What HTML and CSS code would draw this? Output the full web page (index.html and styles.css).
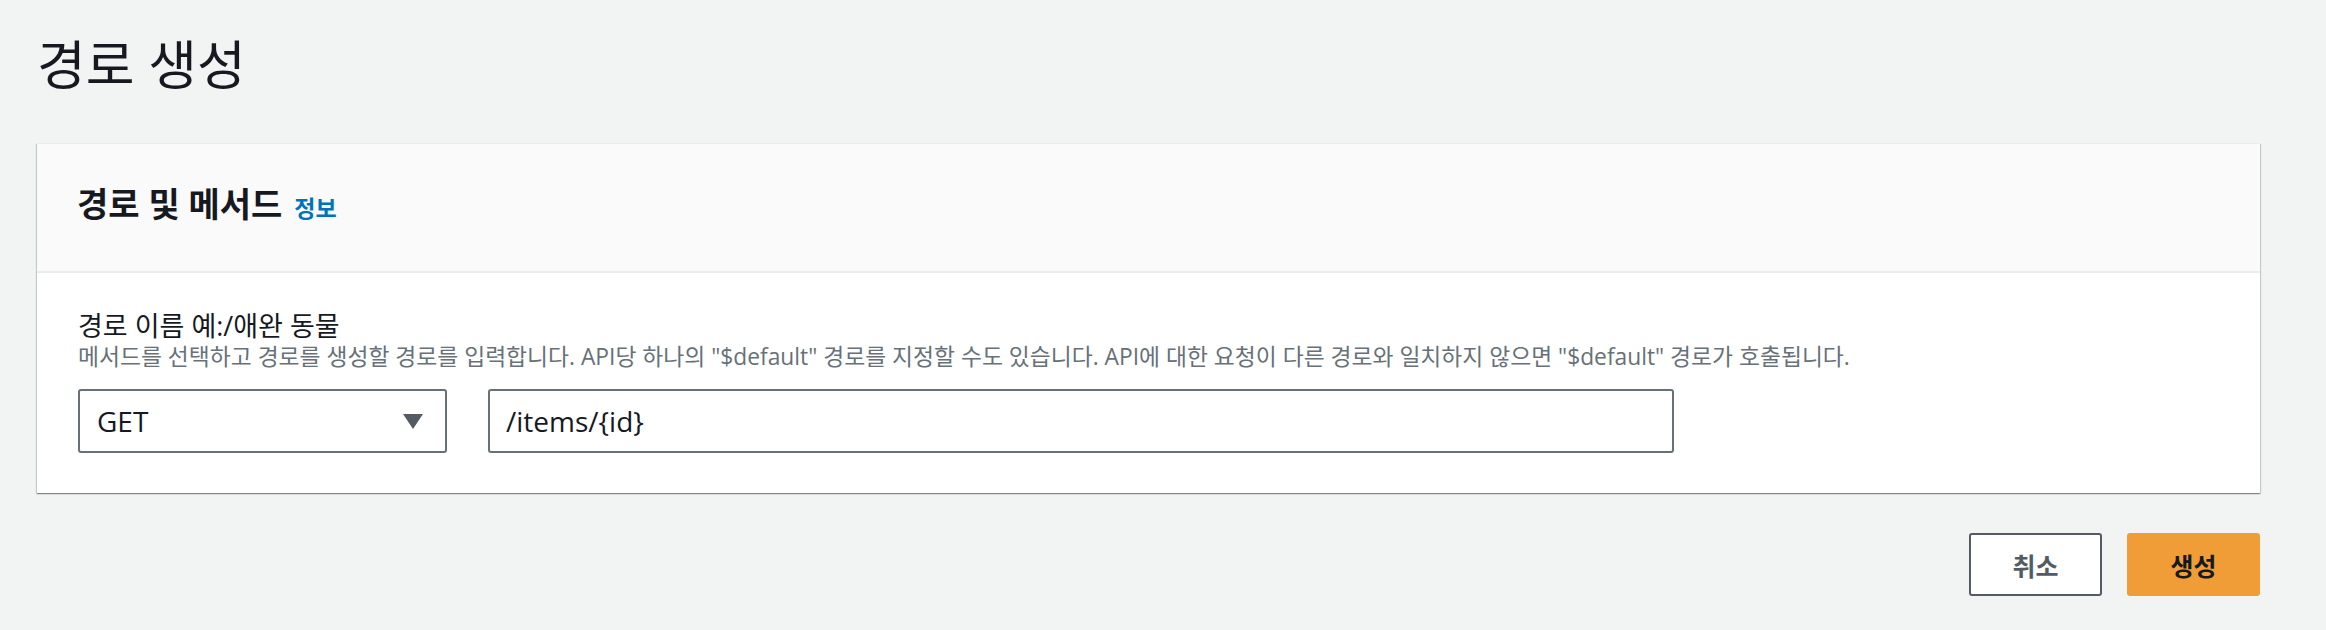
FILE: index.html
```html
<!DOCTYPE html>
<html lang="ko">
<head>
<meta charset="utf-8">
<title>경로 생성</title>
<link rel="stylesheet" href="styles.css">
</head>
<body>
<div class="page">
  <h1 class="page-title">경로 생성</h1>
  <section class="panel">
    <header class="panel-header">
      <h2 class="panel-title">경로 및 메서드</h2>
      <a class="info-link" href="#">정보</a>
    </header>
    <div class="panel-body">
      <div class="field-label">경로 이름 예:/애완 동물</div>
      <div class="field-desc">메서드를 선택하고 경로를 생성할 경로를 입력합니다. API당 하나의 "$default" 경로를 지정할 수도 있습니다. API에 대한 요청이 다른 경로와 일치하지 않으면 "$default" 경로가 호출됩니다.</div>
      <div class="field-row">
        <div class="select">
          <span class="select-value">GET</span>
          <svg class="caret" width="20" height="15" viewBox="0 0 20 15"><polygon points="0,0 20,0 10,15" fill="#545b64"/></svg>
        </div>
        <div class="input">/items/{id}</div>
      </div>
    </div>
  </section>
  <div class="actions">
    <button class="btn btn-cancel">취소</button>
    <button class="btn btn-primary">생성</button>
  </div>
</div>
</body>
</html>
```

FILE: styles.css
```css
html, body {
  margin: 0;
  padding: 0;
  background: #f2f3f3;
}
body {
  font-family: "Open Sans", "Noto Sans CJK KR", sans-serif;
  color: #16191f;
}
.page {
  padding: 34px 66px 0 37px;
}
.page-title {
  margin: 0;
  font-size: 53px;
  line-height: 62px;
  font-weight: 400;
  color: #16191f;
}
.panel {
  margin-top: 47px;
  background: #ffffff;
  box-shadow: 0 1px 1px 0 rgba(0, 28, 36, 0.3), 1px 1px 1px 0 rgba(0, 28, 36, 0.15), -1px 1px 1px 0 rgba(0, 28, 36, 0.15);
  border-top: 1px solid #eaeded;
}
.panel-header {
  display: flex;
  align-items: baseline;
  gap: 12px;
  padding: 40px 40px 47px 40px;
  background: #fafafa;
  border-bottom: 2px solid #eaeded;
}
.panel-title {
  margin: 0;
  font-size: 34px;
  line-height: 40px;
  font-weight: 700;
}
.info-link {
  font-size: 23px;
  font-weight: 700;
  color: #0073bb;
  text-decoration: none;
}
.panel-body {
  padding: 37px 40px 40px 41px;
}
.field-label {
  font-size: 27px;
  line-height: 32px;
}
.field-desc {
  margin-top: 0;
  font-size: 22.8px;
  line-height: 30px;
  color: #687078;
  white-space: nowrap;
}
.field-row {
  display: flex;
  gap: 41px;
  margin-top: 17px;
}
.select, .input {
  box-sizing: border-box;
  height: 64px;
  border: 2px solid #687078;
  border-radius: 3px;
  background: #fff;
  display: flex;
  align-items: center;
  font-size: 28px;
}
.select {
  width: 369px;
  padding: 0 22px 0 17px;
  justify-content: space-between;
}
.input {
  width: 1186px;
  padding: 0 16px;
}
.actions {
  display: flex;
  justify-content: flex-end;
  gap: 25px;
  margin-top: 40px;
}
.btn {
  box-sizing: border-box;
  width: 133px;
  height: 63px;
  border-radius: 3px;
  font-family: "Open Sans", "Noto Sans CJK KR", sans-serif;
  font-size: 25px;
  font-weight: 700;
  cursor: pointer;
}
.btn-cancel {
  background: #fff;
  border: 2px solid #545b64;
  color: #545b64;
}
.btn-primary {
  background: #f09d38;
  border: none;
  color: #16191f;
}
```
